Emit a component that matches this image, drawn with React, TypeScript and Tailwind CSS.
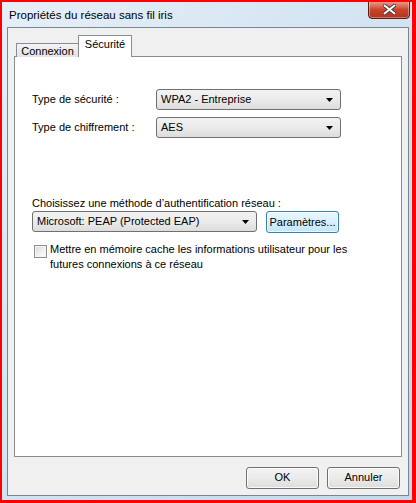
import React from "react"

const ui = { fontFamily: '"Liberation Sans", Arial, sans-serif' }

const Arrow = () => (
  <svg width="8" height="4" viewBox="0 0 8 4" className="shrink-0">
    <path d="M0 0h7L3.5 4z" fill="#000" />
  </svg>
)

const Select = ({ value, width }: { value: string; width: string }) => (
  <div
    className={`${width} h-[21px] flex items-center justify-between pl-[4px] pr-[6px] rounded-[3px] border border-[#707070] bg-gradient-to-b from-[#f2f2f2] via-[#ebebeb] to-[#dddddd] text-[11px] text-black`}
  >
    <span className="leading-none">{value}</span>
    <Arrow />
  </div>
)

export default function App() {
  return (
    <div
      className="w-[416px] h-[503px] overflow-hidden flex flex-col border-l-[2px] border-t-[2px] border-r-[4px] border-b-[3px] border-[#ff0000] bg-gradient-to-br from-[#e6eff8] via-[#d2e3f2] to-[#c2d9ec]"
      style={ui}
    >
      {/* title bar */}
      <div className="h-[25px] flex items-start shrink-0">
        <div className="pl-[7px] pt-[5px] text-[11.5px] text-black leading-[16px]">Propriétés du réseau sans fil iris</div>
        <div className="ml-auto mr-[2px] mt-[-2px] w-[42px] h-[19px] rounded-b-[4px] border border-[#5a1c10] bg-gradient-to-b from-[#e8a493] via-[#c9452b] to-[#b23218] flex items-center justify-center shadow-[inset_0_0_0_1px_rgba(255,255,255,0.35)]">
          <svg width="13" height="11" viewBox="0 0 13 11">
            <path d="M1.5 1.5l10 8M11.5 1.5l-10 8" stroke="#3b3b3b" strokeWidth="3.6" strokeLinecap="round" />
            <path d="M1.5 1.5l10 8M11.5 1.5l-10 8" stroke="#ffffff" strokeWidth="2" strokeLinecap="round" />
          </svg>
        </div>
      </div>

      {/* client area */}
      <div className="flex-1 mx-[5px] mb-[4px] mr-[3px] border border-[#7a8694] bg-[#f0f0f0] flex flex-col text-[11px] text-black">
        <div className="px-[6px] pt-[7px] flex-1 flex flex-col">
          {/* tabs */}
          <div className="flex items-end h-[21px] pl-[2px] relative z-10">
            <div className="h-[14px] w-[62px] border border-b-0 border-r-0 border-[#898c95] bg-gradient-to-b from-[#f3f3f3] to-[#e3e3e3] flex items-center justify-center leading-none mb-[-1px] pt-[2px]">
              Connexion
            </div>
            <div className="h-[22px] w-[54px] border border-b-0 border-[#898c95] bg-white flex justify-center items-start pt-[3px] leading-none mb-[-1px]">
              Sécurité
            </div>
          </div>
          {/* panel */}
          <div className="flex-1 border border-[#898c95] bg-white px-[17px] pt-[32px] flex flex-col">
            <div className="flex items-center h-[21px]">
              <span className="w-[124px]">Type de sécurité :</span>
              <Select value="WPA2 - Entreprise" width="w-[185px]" />
            </div>
            <div className="flex items-center h-[21px] mt-[7px]">
              <span className="w-[124px]">Type de chiffrement :</span>
              <Select value="AES" width="w-[185px]" />
            </div>

            <div className="mt-[58px] leading-[14px]">Choisissez une méthode d’authentification réseau :</div>
            <div className="flex items-center gap-[9px]">
              <Select value="Microsoft: PEAP (Protected EAP)" width="w-[225px]" />
              <div className="w-[73px] h-[22px] mt-[1px] rounded-[3px] border border-[#3c7fb1] bg-gradient-to-b from-[#eaf6fd] via-[#d9f0fc] to-[#bee6fd] flex items-center justify-center shadow-[inset_0_0_0_1px_rgba(255,255,255,0.7)] whitespace-nowrap">
                Paramètres...
              </div>
            </div>
            <div className="flex items-start mt-[9px] gap-[3px]">
              <div className="w-[13px] h-[13px] mt-[3px] ml-[2px] shrink-0 border border-[#8f8f8f] bg-gradient-to-br from-[#d8d8d8] via-[#eeeeee] to-[#ffffff] shadow-[inset_0_0_0_1px_#f4f4f4]" />
              <div className="leading-[15px] whitespace-nowrap">
                Mettre en mémoire cache les informations utilisateur pour les
                <br />
                futures connexions à ce réseau
              </div>
            </div>
          </div>
        </div>
        {/* footer buttons */}
        <div className="h-[38px] shrink-0 flex items-center justify-end gap-[8px] pr-[8px] pt-[3px]">
          <div className="w-[73px] h-[22px] rounded-[3px] border border-[#707070] bg-gradient-to-b from-[#f2f2f2] via-[#ebebeb] to-[#dddddd] flex items-center justify-center shadow-[inset_0_0_0_1px_rgba(255,255,255,0.8)]">
            OK
          </div>
          <div className="w-[73px] h-[22px] rounded-[3px] border border-[#707070] bg-gradient-to-b from-[#f2f2f2] via-[#ebebeb] to-[#dddddd] flex items-center justify-center shadow-[inset_0_0_0_1px_rgba(255,255,255,0.8)]">
            Annuler
          </div>
        </div>
      </div>
    </div>
  )
}
